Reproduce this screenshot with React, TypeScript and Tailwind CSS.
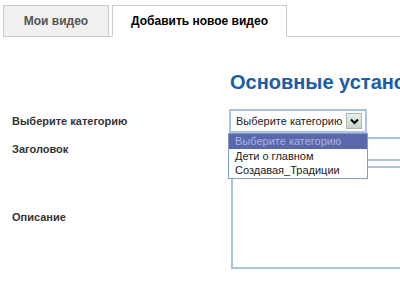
import React from "react";

export default function App() {
  return (
    <div className="relative w-[400px] h-[300px] overflow-hidden bg-white font-['Liberation_Sans',Arial,sans-serif]">
      {/* Tabs */}
      <div className="pt-[5px] pl-[3px]">
        <div className="flex items-end gap-[3px] border-b border-[#cccccc]">
          <div className="w-[106px] h-[31px] bg-[#f0f0f0] border border-[#cccccc] border-b-0 flex items-center justify-center text-[12px] font-bold text-[#555555]">
            Мои видео
          </div>
          <div className="w-[175px] h-[32px] -mb-px bg-white border border-[#cccccc] border-b-white flex items-center justify-center text-[12px] font-bold text-black">
            Добавить новое видео
          </div>
        </div>
      </div>

      {/* Heading */}
      <div className="mt-[35px] pl-[230px] whitespace-nowrap text-[20px] leading-[20px] font-bold text-[#1a5ca8]">
        Основные установки
      </div>

      {/* Form */}
      <div className="mt-[17px] grid grid-cols-[229px_1fr] gap-y-0">
        <div className="flex items-center pl-[12px] text-[11px] leading-[13px] font-bold text-[#333333]">
          Выберите категорию
        </div>
        <div className="relative">
          <div className="w-[138px] h-[24px] border-2 border-[#aac3e0] bg-white flex items-center justify-between pl-[5px] pr-[3px]">
            <span className="text-[11px] text-[#222222] whitespace-nowrap">Выберите категорию</span>
            <span className="w-[16px] h-[16px] border border-[#a8b8b0] bg-gradient-to-b from-[#e8f0ea] to-[#c6d6cc] flex items-center justify-center">
              <svg width="9" height="7" viewBox="0 0 9 7">
                <path d="M1 1.5 L4.5 5 L8 1.5" stroke="#000" strokeWidth="2" fill="none" />
              </svg>
            </span>
          </div>
          {/* Dropdown list */}
          <div className="absolute left-[-1px] top-[24px] z-10 w-[140px] border border-[#7f9cc6] bg-white text-[11px] leading-[14.5px]">
            <div className="bg-[#5a68ab] text-[#a7b3e6] pl-[6px] whitespace-nowrap">Выберите категорию</div>
            <div className="text-[#222222] pl-[6px] whitespace-nowrap">Дети о главном</div>
            <div className="text-[#222222] pl-[6px] whitespace-nowrap">Создавая_Традиции</div>
          </div>
        </div>

        <div className="mt-[4px] flex items-center pl-[12px] text-[11px] leading-[13px] font-bold text-[#333333]">
          Заголовок
        </div>
        <div className="mt-[4px] pl-[2px]">
          <div className="w-[200px] h-[24px] border-2 border-[#aac3e0] bg-white" />
        </div>

        <div className="mt-[5px] flex items-center pl-[12px] text-[11px] leading-[13px] font-bold text-[#333333]">
          Описание
        </div>
        <div className="mt-[5px] pl-[2px]">
          <div className="w-[200px] h-[103px] border-2 border-[#aac3e0] bg-white" />
        </div>
      </div>
    </div>
  );
}
